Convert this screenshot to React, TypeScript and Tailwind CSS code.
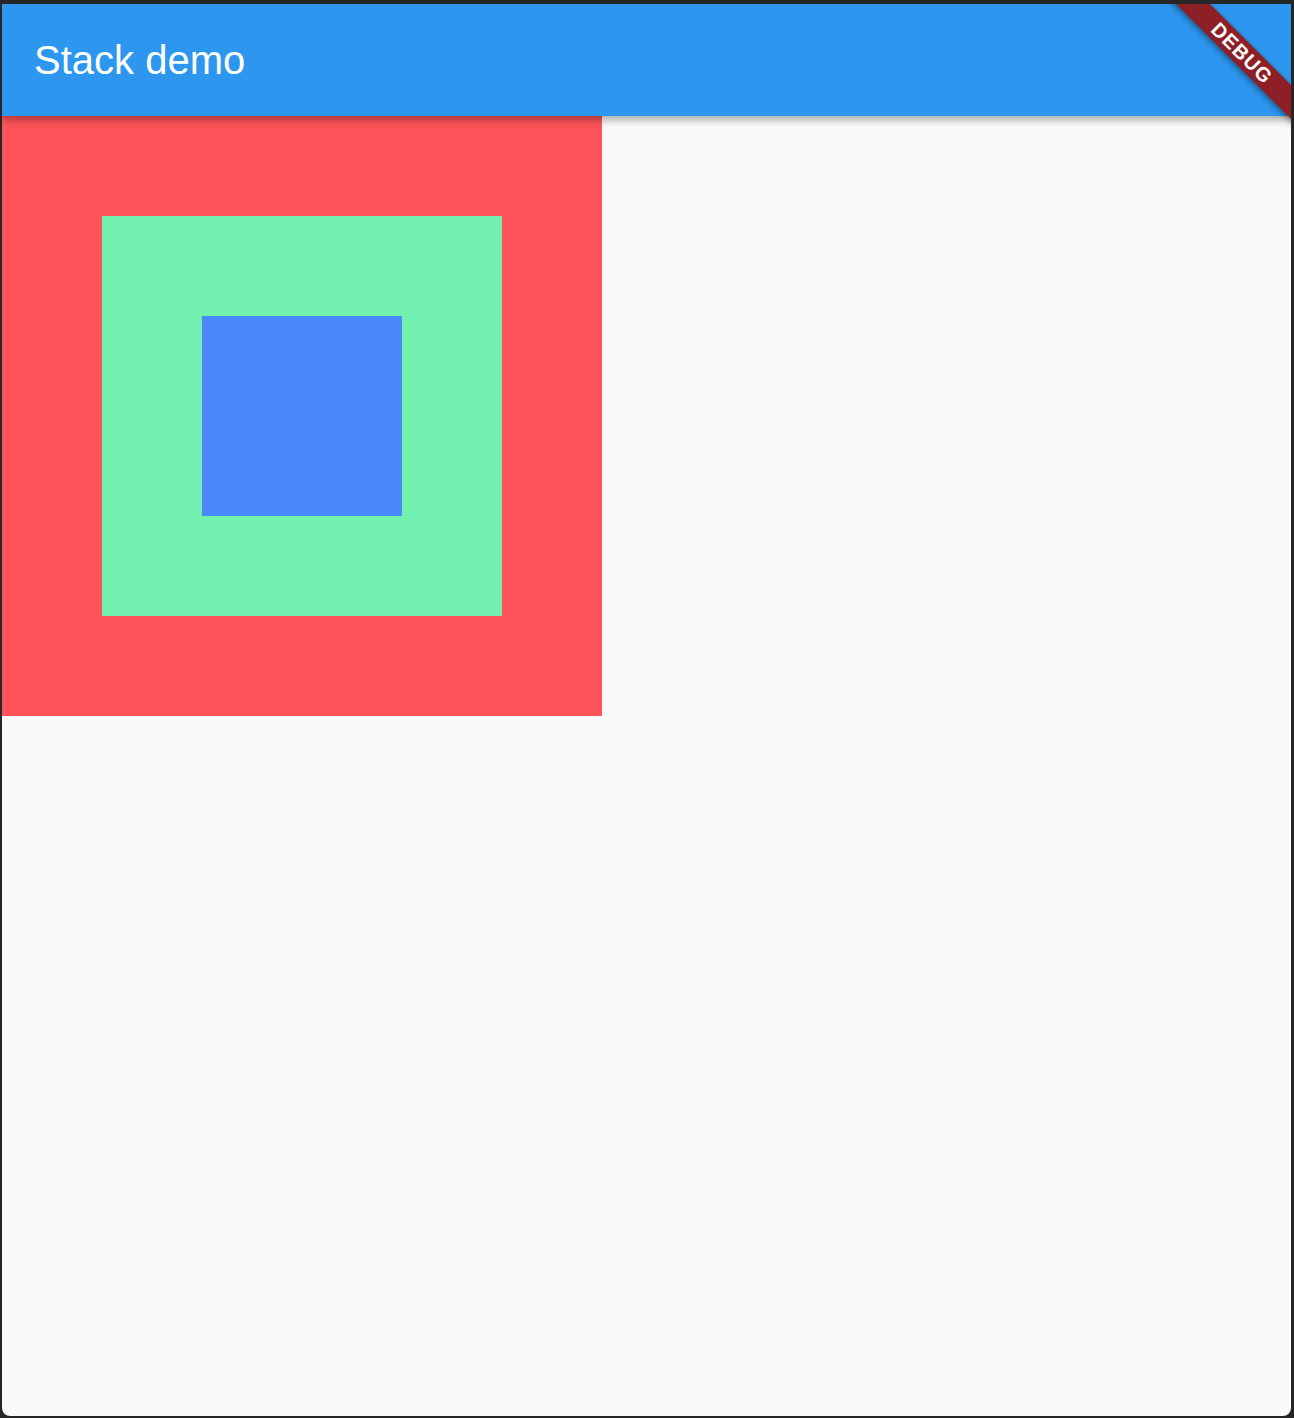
import React from "react";

export default function App() {
  return (
    <div className="w-[1294px] h-[1418px] bg-[#262626] pt-[4px] pl-[2px] pr-[3px] pb-[2px]" style={{ fontFamily: '"Liberation Sans", Arial, sans-serif' }}>
      <div className="relative w-full h-full bg-[#fafafa] rounded-b-[8px] overflow-hidden flex flex-col">
        <header className="relative z-10 h-[112px] shrink-0 bg-[#2d97ef] flex items-center pl-[32px] shadow-[0_4px_8px_rgba(0,0,0,0.32)]">
          <h1 className="text-white text-[40px] leading-none font-normal">Stack demo</h1>
        </header>
        <div className="flex">
          <div className="w-[600px] h-[600px] bg-[#fe5459] p-[100px]">
            <div className="w-[400px] h-[400px] bg-[#71f0b0] p-[100px]">
              <div className="w-[200px] h-[200px] bg-[#4a88fc]" />
            </div>
          </div>
        </div>
        <div className="absolute z-20 right-[-51px] top-[37px] w-[200px] h-[24px] rotate-45 bg-[#8f1f27] flex items-center justify-center shadow-[0_2px_6px_rgba(0,0,0,0.45)]">
          <span className="text-white text-[20px] font-bold leading-none tracking-[1px]">DEBUG</span>
        </div>
      </div>
    </div>
  );
}
